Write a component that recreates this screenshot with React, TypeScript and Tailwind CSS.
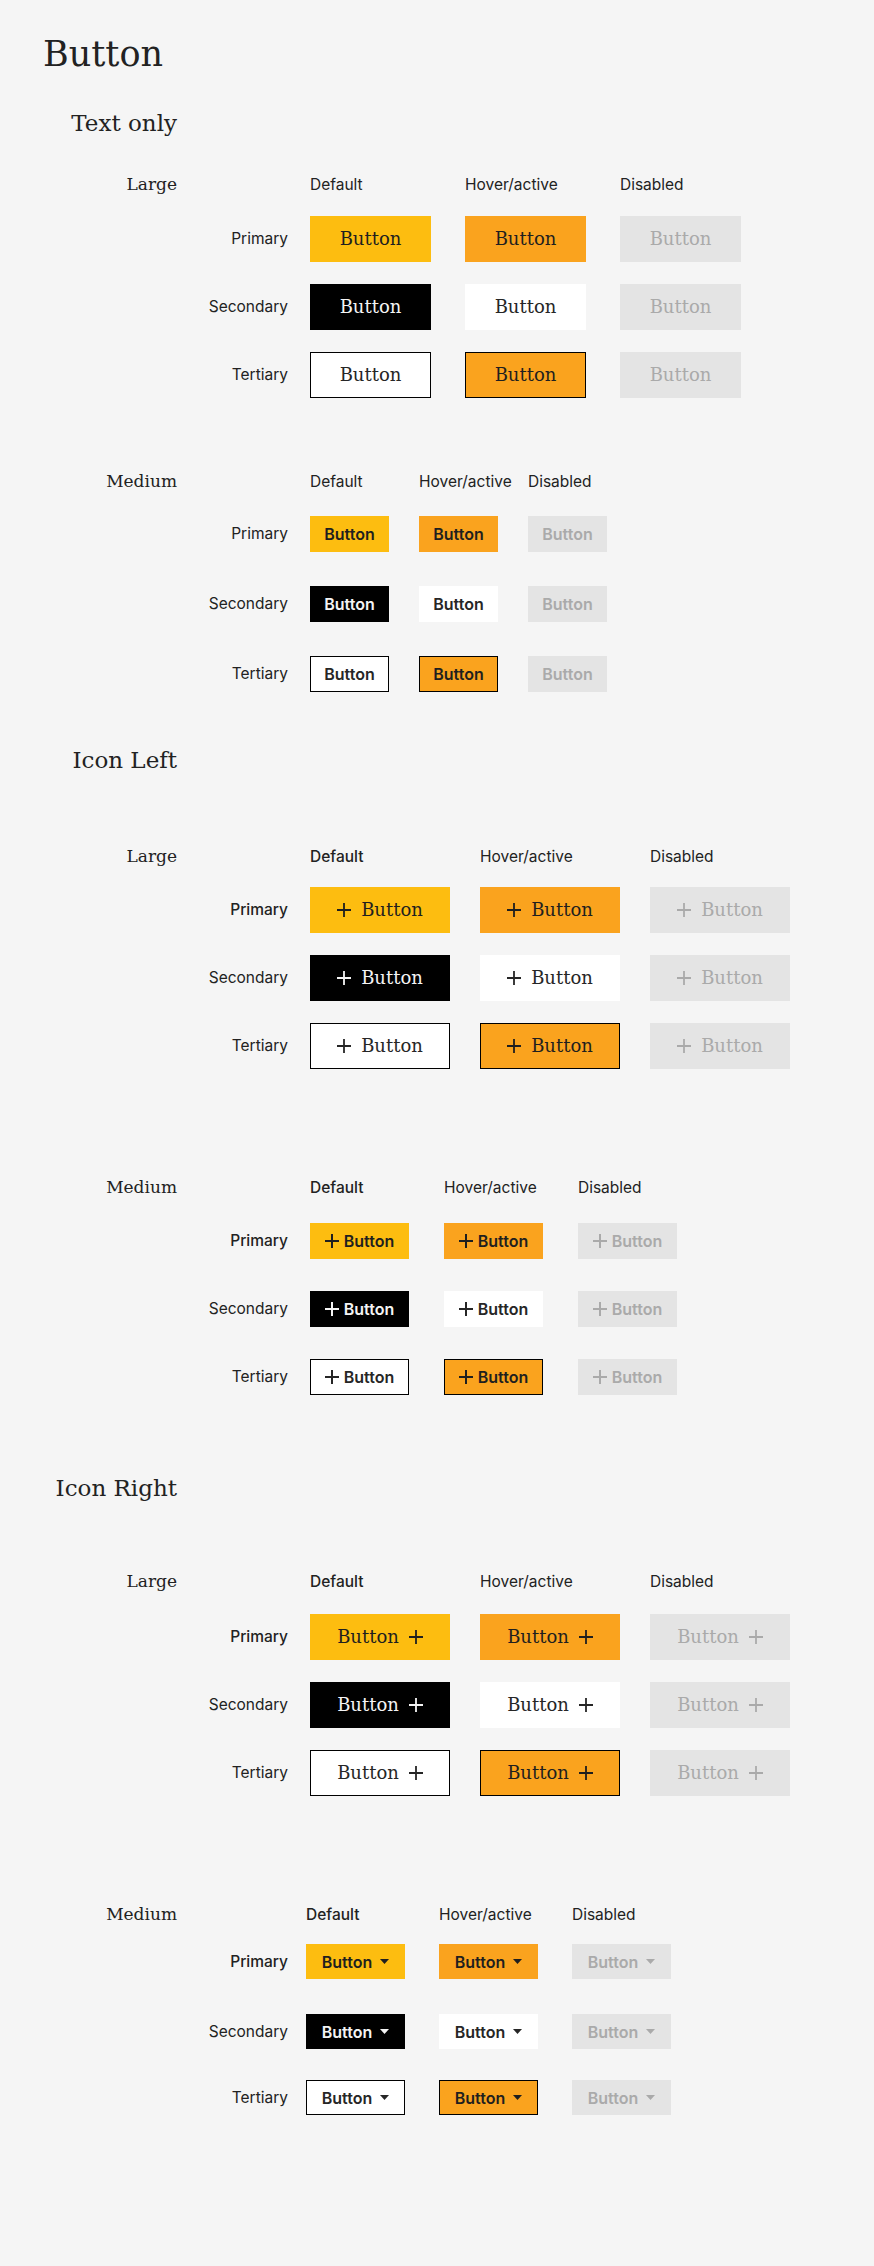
import React from "react";

type Kind = "primary" | "secondary" | "tertiary";
type State = "default" | "hover" | "disabled";
type Icon = "none" | "left" | "right" | "caret";

const serif = "font-['DejaVu_Serif',serif]";
const sans = "font-['Inter',sans-serif]";

const kinds: { id: Kind; label: string }[] = [
  { id: "primary", label: "Primary" },
  { id: "secondary", label: "Secondary" },
  { id: "tertiary", label: "Tertiary" },
];

const states: { id: State; label: string }[] = [
  { id: "default", label: "Default" },
  { id: "hover", label: "Hover/active" },
  { id: "disabled", label: "Disabled" },
];

const disabledSkin = "bg-[#e4e4e4] text-[#aaaaaa]";

const skins: Record<Kind, Record<State, string>> = {
  primary: {
    default: "bg-[#fdbd10] text-[#1f1f1f]",
    hover: "bg-[#faa31e] text-[#1f1f1f]",
    disabled: disabledSkin,
  },
  secondary: {
    default: "bg-black text-[#f4f4f4]",
    hover: "bg-white text-[#262626]",
    disabled: disabledSkin,
  },
  tertiary: {
    default: "bg-white text-[#262626] border border-black",
    hover: "bg-[#faa31e] text-[#1f1f1f] border border-black",
    disabled: disabledSkin,
  },
};

function Plus({ size }: { size: "lg" | "md" }) {
  return (
    <svg
      viewBox="0 0 14 14"
      className="w-[14px] h-[14px] shrink-0"
      fill="none"
      stroke="currentColor"
      strokeWidth={size === "lg" ? 1.8 : 2}
    >
      <path d="M7 0v14M0 7h14" />
    </svg>
  );
}

function Caret() {
  return (
    <svg viewBox="0 0 9 5" className="w-[9px] h-[5px] shrink-0" fill="currentColor">
      <path d="M0 0h9L4.5 5z" />
    </svg>
  );
}

function DemoButton({
  kind,
  state,
  size,
  icon,
  width,
  height,
}: {
  kind: Kind;
  state: State;
  size: "lg" | "md";
  icon: Icon;
  width: string;
  height: string;
}) {
  const text =
    size === "lg"
      ? `${serif} text-[18px]`
      : `${sans} text-[16px] font-semibold`;
  const gap = size === "lg" ? "gap-[10px]" : icon === "caret" ? "gap-[8px]" : "gap-[5px]";
  return (
    <div
      className={`${width} ${height} ${skins[kind][state]} ${gap} flex items-center justify-center leading-none`}
    >
      {icon === "left" && <Plus size={size} />}
      <span className={text}>Button</span>
      {icon === "right" && <Plus size={size} />}
      {icon === "caret" && <Caret />}
    </div>
  );
}

type BlockProps = {
  label: string;
  size: "lg" | "md";
  icon: Icon;
  width: string;
  height: string;
  colGap: string;
  headOffset: string;
  rowOffset: string;
  headMt: string;
  rowsMt: string;
  rowMts: string[];
  strong?: boolean;
};

function Block(p: BlockProps) {
  return (
    <div className={`flex flex-col ${p.headMt}`}>
      <div className="flex items-baseline">
        <div className={`w-[177px] text-right ${serif} text-[17px] leading-none text-[#222]`}>
          {p.label}
        </div>
        <div className={`flex ${p.colGap} ${p.headOffset}`}>
          {states.map((s, i) => (
            <div
              key={s.id}
              className={`${p.width} ${sans} text-[15.5px] leading-none text-[#222] ${
                p.strong && i === 0 ? "font-medium" : ""
              }`}
            >
              {s.label}
            </div>
          ))}
        </div>
      </div>
      <div className={`flex flex-col ${p.rowsMt}`}>
        {kinds.map((k, i) => (
          <div key={k.id} className={`flex items-center ${p.rowMts[i]}`}>
            <div
              className={`w-[288px] text-right ${sans} text-[15.5px] leading-none text-[#222] ${
                p.strong && i === 0 ? "font-medium" : ""
              }`}
            >
              {k.label}
            </div>
            <div className={`flex ${p.colGap} ${p.rowOffset}`}>
              {states.map((s) => (
                <DemoButton
                  key={s.id}
                  kind={k.id}
                  state={s.id}
                  size={p.size}
                  icon={p.icon}
                  width={p.width}
                  height={p.height}
                />
              ))}
            </div>
          </div>
        ))}
      </div>
    </div>
  );
}

function SectionTitle({ children, mt }: { children: React.ReactNode; mt: string }) {
  return (
    <h2 className={`w-[177px] text-right ${serif} text-[23px] leading-[24px] text-[#222] ${mt}`}>
      {children}
    </h2>
  );
}

export default function App() {
  return (
    <div className="min-h-screen bg-[#f5f5f5] pt-[36px] pb-[40px]">
      <h1 className={`ml-[43px] ${serif} text-[35px] leading-[36px] text-[#222]`}>Button</h1>

      <SectionTitle mt="mt-[39px]">Text only</SectionTitle>
      <Block
        label="Large"
        size="lg"
        icon="none"
        width="w-[121px]"
        height="h-[46px]"
        colGap="gap-x-[34px]"
        headOffset="ml-[133px]"
        rowOffset="ml-[22px]"
        headMt="mt-[41px]"
        rowsMt="mt-[23px]"
        rowMts={["", "mt-[22px]", "mt-[22px]"]}
      />
      <Block
        label="Medium"
        size="md"
        icon="none"
        width="w-[79px]"
        height="h-[36px]"
        colGap="gap-x-[30px]"
        headOffset="ml-[133px]"
        rowOffset="ml-[22px]"
        headMt="mt-[75px]"
        rowsMt="mt-[26px]"
        rowMts={["", "mt-[34px]", "mt-[34px]"]}
      />

      <SectionTitle mt="mt-[56px]">Icon Left</SectionTitle>
      <Block
        label="Large"
        size="lg"
        icon="left"
        width="w-[140px]"
        height="h-[46px]"
        colGap="gap-x-[30px]"
        headOffset="ml-[133px]"
        rowOffset="ml-[22px]"
        headMt="mt-[76px]"
        rowsMt="mt-[22px]"
        rowMts={["", "mt-[22px]", "mt-[22px]"]}
        strong
      />
      <Block
        label="Medium"
        size="md"
        icon="left"
        width="w-[99px]"
        height="h-[36px]"
        colGap="gap-x-[35px]"
        headOffset="ml-[133px]"
        rowOffset="ml-[22px]"
        headMt="mt-[110px]"
        rowsMt="mt-[27px]"
        rowMts={["", "mt-[32px]", "mt-[32px]"]}
        strong
      />

      <SectionTitle mt="mt-[81px]">Icon Right</SectionTitle>
      <Block
        label="Large"
        size="lg"
        icon="right"
        width="w-[140px]"
        height="h-[46px]"
        colGap="gap-x-[30px]"
        headOffset="ml-[133px]"
        rowOffset="ml-[22px]"
        headMt="mt-[73px]"
        rowsMt="mt-[24px]"
        rowMts={["", "mt-[22px]", "mt-[22px]"]}
        strong
      />
      <Block
        label="Medium"
        size="md"
        icon="caret"
        width="w-[99px]"
        height="h-[35px]"
        colGap="gap-x-[34px]"
        headOffset="ml-[129px]"
        rowOffset="ml-[18px]"
        headMt="mt-[110px]"
        rowsMt="mt-[21px]"
        rowMts={["", "mt-[35px]", "mt-[31px]"]}
        strong
      />
    </div>
  );
}
